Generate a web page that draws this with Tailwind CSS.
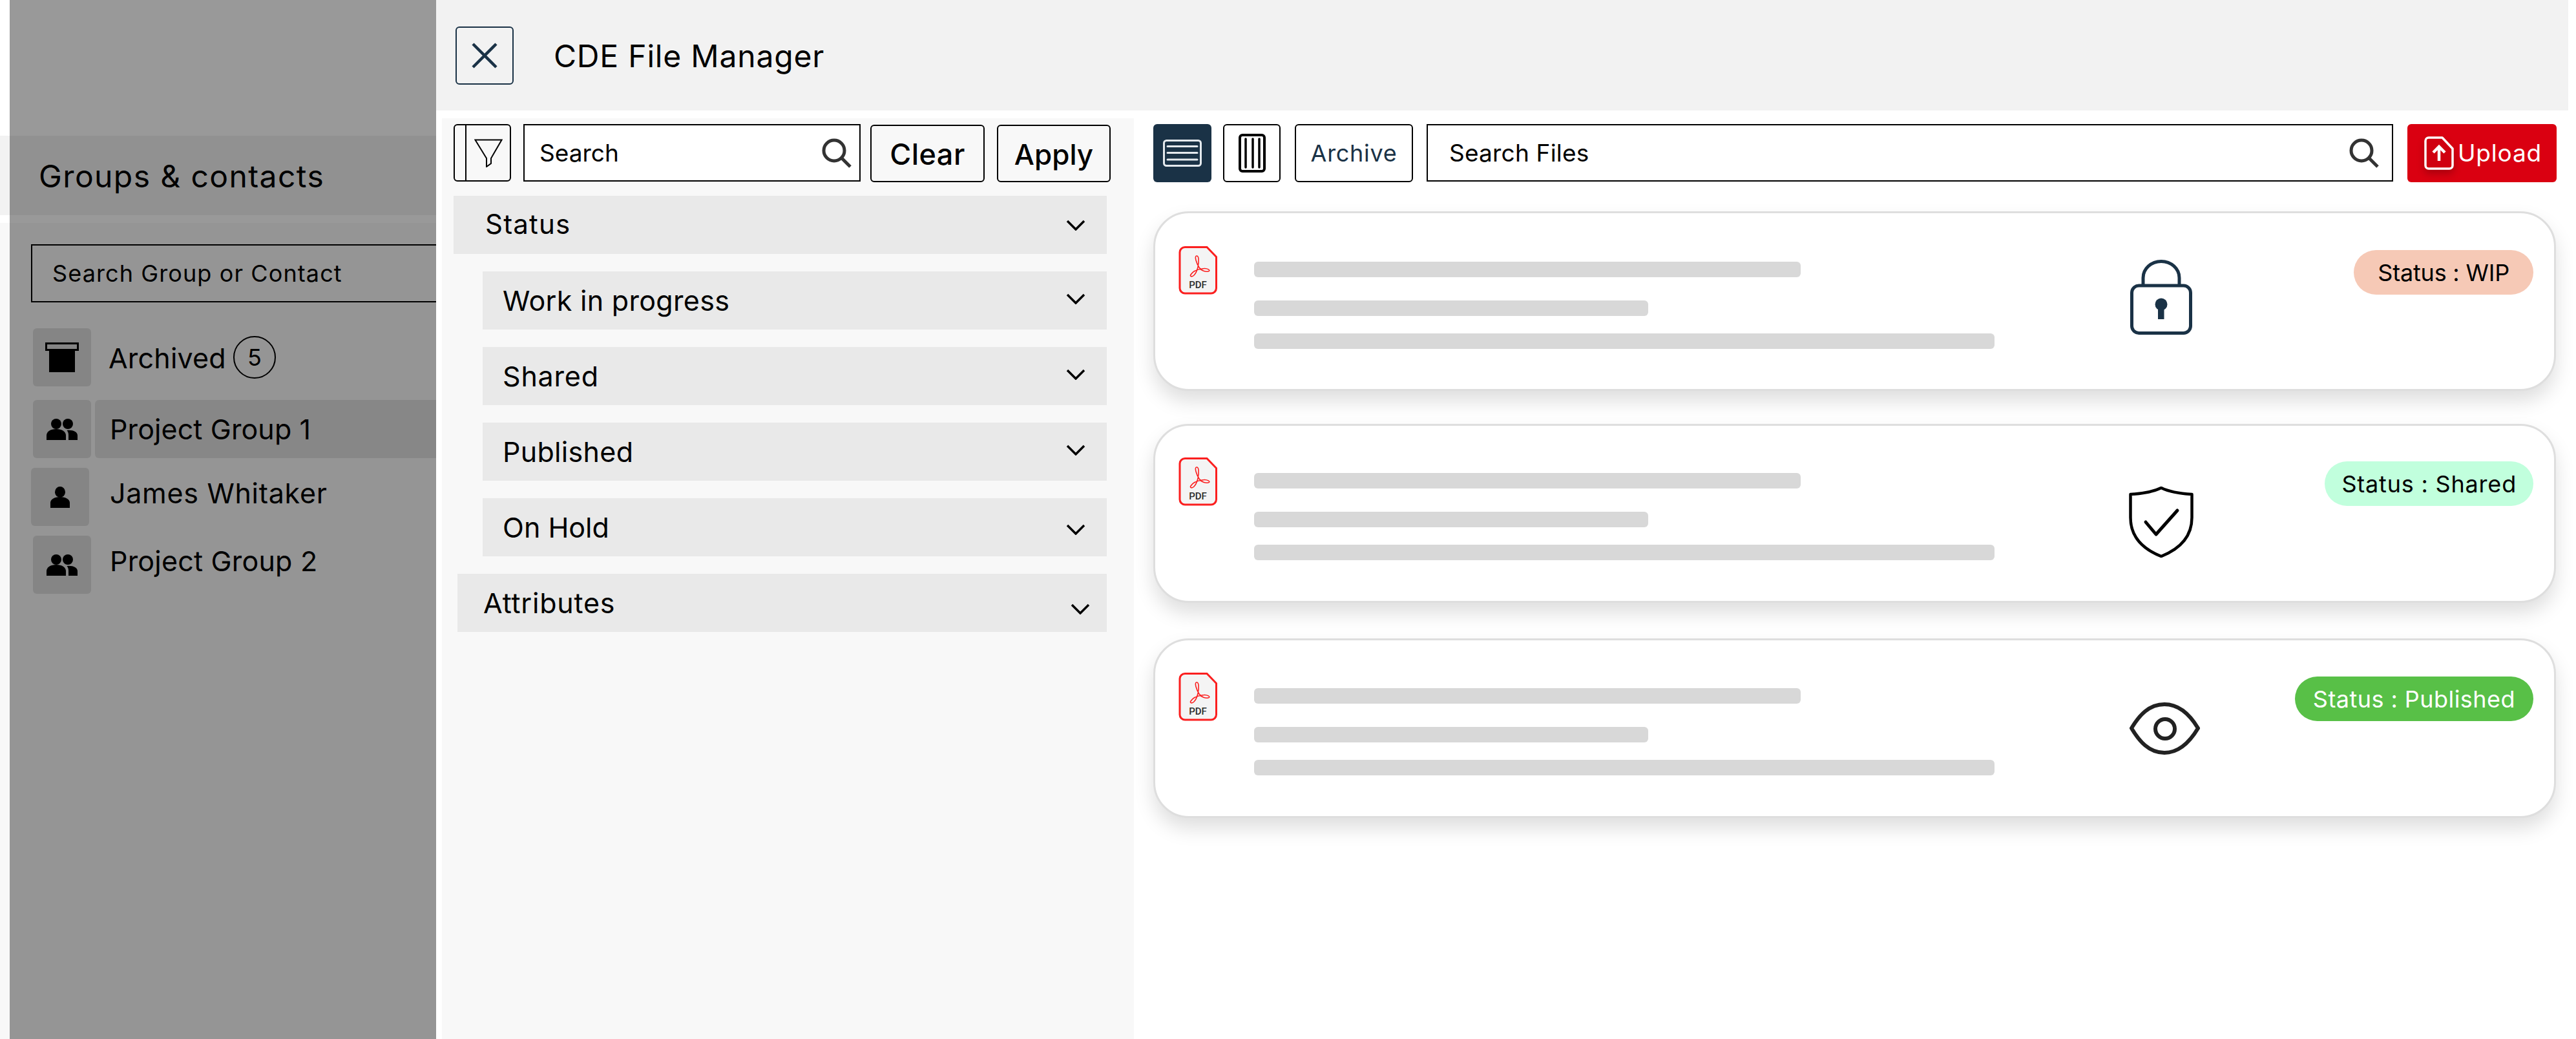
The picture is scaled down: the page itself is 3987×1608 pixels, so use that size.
<!DOCTYPE html>
<html lang="en">
<head>
  <meta charset="UTF-8" />
  <title>CDE File Manager</title>
  <script src="https://cdn.jsdelivr.net/npm/@tailwindcss/browser@4"></script>
</head>
<body class="bg-white">
  <div class="flex w-[3987px] h-[1608px] overflow-hidden font-['Inter',sans-serif] text-black">

    <!-- Sidebar behind the modal -->
    <aside class="relative w-[675px] shrink-0 bg-white">
      <div class="h-[210px]"></div>
      <div class="h-[123px] bg-[#f2f2f2] flex items-center pl-[60px] pt-[3px] text-[48px] tracking-[1.4px]">Groups &amp; contacts</div>
      <div class="h-[12px]"></div>
      <div class="h-[1263px] bg-[#f8f8f8] pt-[33px]">
        <div class="ml-[48px] w-[700px] h-[90px] border-2 border-black flex items-center pl-[31px] text-[36px] tracking-[1.1px]">Search Group or Contact</div>
        <div class="mt-[40px] flex flex-col">
          <div class="flex items-center h-[90px] pl-[51px]">
            <div class="w-[90px] h-[90px] rounded-md bg-[#dedede] flex items-center justify-center">
              <svg width="52" height="46" viewBox="0 0 52 46"><rect x="1.500" y="1.500" width="49" height="10" fill="none" stroke="#000" stroke-width="3"/><rect x="6" y="12" width="40" height="34" fill="#000"/></svg>
            </div>
            <span class="ml-[27px] pt-[2px] text-[43px] tracking-[0.2px]">Archived</span>
            <span class="ml-[11px] w-[66px] h-[66px] rounded-full border-2 border-black flex items-center justify-center text-[36px]">5</span>
          </div>
          <div class="flex mt-[21px] pl-[51px]">
            <div class="w-[90px] h-[90px] rounded-md bg-[#dedede] flex items-center justify-center">
              <svg width="48" height="33" viewBox="0 0 48 33"><circle cx="15" cy="8" r="8"/><circle cx="33" cy="8" r="8"/><path d="M0 33v-7c0-6 6-10 15-10s15 4 15 10v7z"/><path d="M34 33v-8c0-3-.8-5-2.500-7 9-1 16.500 2 16.500 8v7z"/></svg>
            </div>
            <div class="ml-[6px] flex-1 h-[90px] rounded-l-md bg-[#e2e2e2] flex items-center pl-[23px] text-[43px] tracking-[0.1px]">Project Group 1</div>
          </div>
          <div class="flex mt-[15px] pl-[48px]">
            <div class="w-[90px] h-[90px] rounded-md bg-[#dedede] flex items-center justify-center">
              <svg width="30" height="33" viewBox="0 0 30 33"><ellipse cx="15" cy="8.500" rx="8" ry="8.500"/><path d="M0 33v-8c0-5 6-9 15-9s15 4 15 9v8z"/></svg>
            </div>
            <span class="ml-[32px] mt-[7px] text-[43px] tracking-[0.7px]">James Whitaker</span>
          </div>
          <div class="flex mt-[15px] pl-[51px]">
            <div class="w-[90px] h-[90px] rounded-md bg-[#dedede] flex items-center justify-center">
              <svg width="48" height="33" viewBox="0 0 48 33"><circle cx="15" cy="8" r="8"/><circle cx="33" cy="8" r="8"/><path d="M0 33v-7c0-6 6-10 15-10s15 4 15 10v7z"/><path d="M34 33v-8c0-3-.8-5-2.500-7 9-1 16.500 2 16.500 8v7z"/></svg>
            </div>
            <span class="ml-[29px] mt-[7px] text-[43px] tracking-[0.2px]">Project Group 2</span>
          </div>
        </div>
      </div>
      <!-- Dim layer -->
      <div class="absolute inset-y-0 left-[15px] right-0 bg-black/40"></div>
    </aside>

    <!-- Modal -->
    <main class="relative flex-1 flex flex-col bg-white overflow-hidden">
      <header class="h-[171px] mr-[12px] shrink-0 bg-[#f2f2f2] flex items-center pl-[30px]">
        <button class="w-[90px] h-[90px] rounded-md border-2 border-[#1a3246] flex items-center justify-center">
          <svg width="40" height="40" viewBox="0 0 40 40"><path d="M2 2l36 36M38 2L2 38" stroke="#1a3246" stroke-width="4.500" fill="none"/></svg>
        </button>
        <h1 class="ml-[62px] pt-[3px] text-[48px] tracking-[0.8px]">CDE File Manager</h1>
      </header>

      <div class="flex flex-1 pt-[12px]">
        <!-- Filters -->
        <section class="ml-[9px] w-[1071px] shrink-0 bg-[#f8f8f8] pt-[9px] pl-[18px]">
          <div class="flex items-start">
            <button class="w-[89px] h-[89px] rounded-md border-2 border-black flex">
              <span class="w-[18px] border-r-2 border-black"></span>
              <span class="flex-1 flex items-center justify-center">
                <svg width="44" height="44" viewBox="0 0 44 44"><path d="M1.500 1.500h41L26 30v8l-7 5V30z" fill="none" stroke="#000" stroke-width="2"/></svg>
              </span>
            </button>
            <div class="ml-[19px] w-[522px] h-[89px] bg-white border-2 border-black flex items-center justify-between pl-[23px] pr-[12px] text-[37px]">
              <span>Search</span>
              <svg width="46" height="46" viewBox="0 0 46 46"><circle cx="19" cy="19" r="16" fill="none" stroke="#333" stroke-width="5"/><path d="M30 30l14 14" stroke="#333" stroke-width="5"/></svg>
            </div>
            <button class="ml-[15px] mt-[1px] pt-[2px] w-[177px] h-[89px] rounded-md border-2 border-black text-[45px] tracking-[0.5px] font-medium">Clear</button>
            <button class="ml-[19px] mt-[1px] pt-[2px] w-[176px] h-[89px] rounded-md border-2 border-black text-[44px] font-medium">Apply</button>
          </div>

          <div class="mt-[21px] w-[1011px] h-[90px] bg-[#e9e9e9] flex items-center justify-between pl-[49px] pr-[33px] text-[42px] tracking-[1.2px]">
            <span class="-mt-[3px]">Status</span>
            <svg width="30" height="17" viewBox="0 0 30 17"><path d="M2 2l13 13L28 2" fill="none" stroke="#000" stroke-width="3.500"/></svg>
          </div>
          <div class="mt-[27px] ml-[45px] w-[966px] h-[90px] bg-[#e9e9e9] flex items-center justify-between pl-[31px] pr-[33px] text-[43px] tracking-[0.3px]">
            <span>Work in progress</span>
            <svg class="-mt-[5px]" width="30" height="17" viewBox="0 0 30 17"><path d="M2 2l13 13L28 2" fill="none" stroke="#000" stroke-width="3.500"/></svg>
          </div>
          <div class="mt-[27px] ml-[45px] w-[966px] h-[90px] bg-[#e9e9e9] flex items-center justify-between pl-[31px] pr-[33px] text-[43px] tracking-[0.8px]">
            <span>Shared</span>
            <svg class="-mt-[5px]" width="30" height="17" viewBox="0 0 30 17"><path d="M2 2l13 13L28 2" fill="none" stroke="#000" stroke-width="3.500"/></svg>
          </div>
          <div class="mt-[27px] ml-[45px] w-[966px] h-[90px] bg-[#e9e9e9] flex items-center justify-between pl-[31px] pr-[33px] text-[43px] tracking-[0.3px]">
            <span>Published</span>
            <svg class="-mt-[5px]" width="30" height="17" viewBox="0 0 30 17"><path d="M2 2l13 13L28 2" fill="none" stroke="#000" stroke-width="3.500"/></svg>
          </div>
          <div class="mt-[27px] ml-[45px] w-[966px] h-[90px] bg-[#e9e9e9] flex items-center justify-between pl-[31px] pr-[33px] text-[43px]">
            <span>On Hold</span>
            <svg class="mt-[6px]" width="30" height="17" viewBox="0 0 30 17"><path d="M2 2l13 13L28 2" fill="none" stroke="#000" stroke-width="3.500"/></svg>
          </div>
          <div class="mt-[27px] ml-[6px] w-[1005px] h-[90px] bg-[#e9e9e9] flex items-center justify-between pl-[40px] pr-[26px] text-[43px] tracking-[0.8px]">
            <span>Attributes</span>
            <svg class="mt-[19px]" width="30" height="17" viewBox="0 0 30 17"><path d="M2 2l13 13L28 2" fill="none" stroke="#000" stroke-width="3.500"/></svg>
          </div>
        </section>

        <!-- Files -->
        <section class="ml-[30px] flex-1 pt-[9px]">
          <div class="flex items-start">
            <button class="w-[90px] h-[90px] rounded-md bg-[#1a3246] flex items-center justify-center">
              <svg width="60" height="42" viewBox="0 0 60 42"><rect x="1.500" y="1.500" width="57" height="39" rx="4" fill="none" stroke="#e4e9ed" stroke-width="3"/><path d="M7 10.500h46M7 20.500h46M7 31h46" stroke="#e4e9ed" stroke-width="3" stroke-linecap="round"/></svg>
            </button>
            <button class="ml-[18px] w-[89px] h-[90px] rounded-md border-2 border-black bg-white flex items-center justify-center">
              <svg width="42" height="60" viewBox="0 0 42 60"><rect x="2" y="2" width="38" height="56" rx="4" fill="none" stroke="#000" stroke-width="4"/><path d="M11 8v44M22 8v44M32 8v44" stroke="#000" stroke-width="3.500" stroke-linecap="round"/></svg>
            </button>
            <button class="ml-[22px] w-[183px] h-[90px] rounded-md border-2 border-black bg-white text-[36px] tracking-[0.7px] text-[#1a3246]">Archive</button>
            <div class="ml-[21px] w-[1496px] h-[89px] border-2 border-black bg-white flex items-center justify-between pl-[33px] pr-[20px] text-[37px] tracking-[0.2px]">
              <span>Search Files</span>
              <svg width="46" height="46" viewBox="0 0 46 46"><circle cx="19" cy="19" r="16" fill="none" stroke="#333" stroke-width="5"/><path d="M30 30l14 14" stroke="#333" stroke-width="5"/></svg>
            </div>
            <button class="ml-[22px] w-[231px] h-[90px] rounded-md bg-[#da0011] flex items-center pl-[26px] text-white text-[37px] tracking-[0.8px]">
              <svg class="drop-shadow-[0_6px_6px_rgba(0,0,0,0.22)]" width="46" height="52" viewBox="0 0 46 52"><path d="M7 2h21l16 17v26a5 5 0 0 1-5 5H7a5 5 0 0 1-5-5V7a5 5 0 0 1 5-5z" fill="#d00010" stroke="#fff" stroke-width="3.500" stroke-linejoin="round"/><path d="M23 38V17M14 25l9-9 9 9" fill="none" stroke="#fff" stroke-width="4.500"/></svg>
              <span class="ml-[6px]">Upload</span>
            </button>
          </div>

          <!-- Card: WIP -->
          <article class="mt-[45px] w-[2171px] h-[278px] rounded-[55px] border-[3px] border-[#dedede] bg-white shadow-[0_16px_30px_rgba(0,0,0,0.13)] flex items-start pl-[36px] pr-[32px]">
            <svg class="mt-[51px] shrink-0" width="60" height="75" viewBox="0 0 60 75"><path d="M10 1.500h34l14.500 15V65a8 8 0 0 1-8 8H10a8 8 0 0 1-8-8V9.500a8 8 0 0 1 8-8z" fill="#f4f4f4" stroke="#fb1f1f" stroke-width="3"/><path d="M28 15c-4 0 0 12 4 18 3 5 10 7 14 6 5-1-1-6-10-4-6 1-14 4-17 9-2 3 2 4 5 1 5-5 8-17 7-26-.4-3-1-4-3-4z" fill="none" stroke="#fb1f1f" stroke-width="1.600"/><text x="30" y="65" text-anchor="middle" font-family="Roboto" font-size="15" font-weight="500" fill="#2b2b2b">PDF</text></svg>
            <div class="ml-[57px] mt-[75px] w-[1146px] shrink-0 flex flex-col">
              <div class="h-[24px] w-[846px] rounded-md bg-[#d8d8d8]"></div>
              <div class="mt-[36px] h-[24px] w-[610px] rounded-md bg-[#d8d8d8]"></div>
              <div class="mt-[27px] h-[24px] w-full rounded-md bg-[#d8d8d8]"></div>
            </div>
            <svg class="ml-[210px] mt-[72px] shrink-0" width="96" height="116" viewBox="0 0 96 116"><rect x="2.500" y="40" width="91" height="73.500" rx="11" fill="none" stroke="#1a3246" stroke-width="5"/><path d="M20 40V28a28 25.500 0 0 1 56 0v12" fill="none" stroke="#1a3246" stroke-width="5"/><circle cx="48" cy="69" r="9.500" fill="#1a3246"/><rect x="43" y="70" width="9.500" height="22" fill="#1a3246"/></svg>
            <div class="flex-1 flex justify-end mt-[57px]">
              <span class="h-[69px] px-[37px] rounded-full bg-[#f6c9b6] flex items-center text-[36px] tracking-[-0.2px]">Status : WIP</span>
            </div>
          </article>

          <!-- Card: Shared -->
          <article class="mt-[51px] w-[2171px] h-[277px] rounded-[55px] border-[3px] border-[#dedede] bg-white shadow-[0_16px_30px_rgba(0,0,0,0.13)] flex items-start pl-[36px] pr-[32px]">
            <svg class="mt-[49px] shrink-0" width="60" height="75" viewBox="0 0 60 75"><path d="M10 1.500h34l14.500 15V65a8 8 0 0 1-8 8H10a8 8 0 0 1-8-8V9.500a8 8 0 0 1 8-8z" fill="#f4f4f4" stroke="#fb1f1f" stroke-width="3"/><path d="M28 15c-4 0 0 12 4 18 3 5 10 7 14 6 5-1-1-6-10-4-6 1-14 4-17 9-2 3 2 4 5 1 5-5 8-17 7-26-.4-3-1-4-3-4z" fill="none" stroke="#fb1f1f" stroke-width="1.600"/><text x="30" y="65" text-anchor="middle" font-family="Roboto" font-size="15" font-weight="500" fill="#2b2b2b">PDF</text></svg>
            <div class="ml-[57px] mt-[73px] w-[1146px] shrink-0 flex flex-col">
              <div class="h-[24px] w-[846px] rounded-md bg-[#d8d8d8]"></div>
              <div class="mt-[36px] h-[24px] w-[610px] rounded-md bg-[#d8d8d8]"></div>
              <div class="mt-[27px] h-[24px] w-full rounded-md bg-[#d8d8d8]"></div>
            </div>
            <svg class="ml-[208px] mt-[94px] shrink-0" width="100" height="110" viewBox="0 0 100 110"><path d="M50 2C38 8 20 11 2.500 12v36C2.500 80 25 98 50 108c25-10 47.500-28 47.500-60V12C80 11 62 8 50 2z" fill="none" stroke="#000" stroke-width="4.500" stroke-linejoin="round"/><path d="M26 55l16 19 33-37" fill="none" stroke="#000" stroke-width="5" stroke-linecap="round" stroke-linejoin="round"/></svg>
            <div class="flex-1 flex justify-end mt-[55px]">
              <span class="h-[69px] px-[26px] rounded-full bg-[#c1ffdd] flex items-center text-[36px] tracking-[0.8px]">Status : Shared</span>
            </div>
          </article>

          <!-- Card: Published -->
          <article class="mt-[55px] w-[2171px] h-[278px] rounded-[55px] border-[3px] border-[#dedede] bg-white shadow-[0_16px_30px_rgba(0,0,0,0.13)] flex items-start pl-[36px] pr-[32px]">
            <svg class="mt-[50px] shrink-0" width="60" height="75" viewBox="0 0 60 75"><path d="M10 1.500h34l14.500 15V65a8 8 0 0 1-8 8H10a8 8 0 0 1-8-8V9.500a8 8 0 0 1 8-8z" fill="#f4f4f4" stroke="#fb1f1f" stroke-width="3"/><path d="M28 15c-4 0 0 12 4 18 3 5 10 7 14 6 5-1-1-6-10-4-6 1-14 4-17 9-2 3 2 4 5 1 5-5 8-17 7-26-.4-3-1-4-3-4z" fill="none" stroke="#fb1f1f" stroke-width="1.600"/><text x="30" y="65" text-anchor="middle" font-family="Roboto" font-size="15" font-weight="500" fill="#2b2b2b">PDF</text></svg>
            <div class="ml-[57px] mt-[74px] w-[1146px] shrink-0 flex flex-col">
              <div class="h-[24px] w-[846px] rounded-md bg-[#d8d8d8]"></div>
              <div class="mt-[36px] h-[24px] w-[610px] rounded-md bg-[#d8d8d8]"></div>
              <div class="mt-[27px] h-[24px] w-full rounded-md bg-[#d8d8d8]"></div>
            </div>
            <svg class="ml-[209px] mt-[96px] shrink-0" width="109" height="81" viewBox="0 0 109 81"><path d="M3 40C15 20 30 3 54 3s40 17 52 37c-12 20-28 38-52 38S15 60 3 40z" fill="none" stroke="#222" stroke-width="6"/><circle cx="55" cy="41" r="15" fill="none" stroke="#222" stroke-width="6"/></svg>
            <div class="flex-1 flex justify-end mt-[56px]">
              <span class="h-[69px] px-[28px] rounded-full bg-[#58c047] flex items-center text-[36px] tracking-[0.45px] text-white">Status : Published</span>
            </div>
          </article>
        </section>
      </div>
    </main>
  </div>
</body>
</html>
